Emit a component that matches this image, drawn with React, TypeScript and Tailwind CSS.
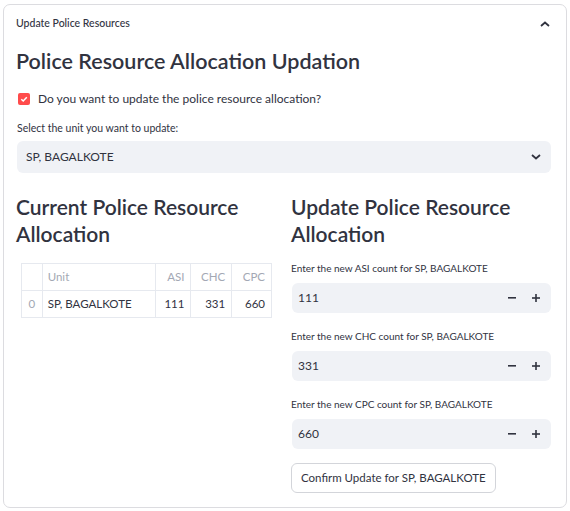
import React from "react";

const font = { fontFamily: '"Source Sans Pro", Lato, "Noto Sans", sans-serif' };

function NumberInput({ label, value }: { label: string; value: string }) {
  return (
    <div className="flex flex-col">
      <div className="text-[10px] leading-[14px] text-[#31333F] mb-[8px]">{label}</div>
      <div className="h-[30px] w-[259px] ml-[1px] rounded-[6px] bg-[#F0F2F6] flex items-center pl-[6px] pr-[3px]">
        <span className="flex-1 text-[12px] text-[#31333F]">{value}</span>
        <span className="w-[24px] flex justify-center">
          <svg width="8" height="2" viewBox="0 0 8 2"><rect width="8" height="1.6" fill="#31333F" /></svg>
        </span>
        <span className="w-[24px] flex justify-center">
          <svg width="8" height="8" viewBox="0 0 8 8"><rect y="3.2" width="8" height="1.6" fill="#31333F" /><rect x="3.2" width="1.6" height="8" fill="#31333F" /></svg>
        </span>
      </div>
    </div>
  );
}

export default function App() {
  return (
    <div className="w-[570px] h-[511px] bg-white pt-[4px] pl-[3px]" style={font}>
      <div className="w-[564px] h-[504px] border border-[#DCDCE0] rounded-[7px] flex flex-col">
        <div className="h-[34px] flex items-center justify-between pl-[12px] pr-[16px] pt-[3px]">
          <span className="text-[10.5px] font-medium text-[#31333F]">Update Police Resources</span>
          <svg width="10" height="6" viewBox="0 0 10 6"><path d="M1 5 L5 1.5 L9 5" fill="none" stroke="#31333F" strokeWidth="1.8" /></svg>
        </div>
        <div className="pl-[12px] pr-[15px] flex flex-col">
          <h1 className="text-[21.5px] leading-[30px] font-semibold text-[#31333F] mt-[7px]">Police Resource Allocation Updation</h1>
          <div className="flex items-center mt-[15px] h-[16px]">
            <div className="w-[12px] h-[12px] ml-[2px] rounded-[2px] bg-[#FF4B4B] flex items-center justify-center">
              <svg width="8" height="8" viewBox="0 0 8 8"><path d="M1.3 4.2 L3.2 6 L6.8 2.2" fill="none" stroke="white" strokeWidth="1.5" /></svg>
            </div>
            <span className="ml-[8px] text-[12px] text-[#31333F]">Do you want to update the police resource allocation?</span>
          </div>
          <div className="text-[10.5px] leading-[14px] text-[#31333F] mt-[14px] ml-[1px]">Select the unit you want to update:</div>
          <div className="mt-[6px] ml-[1px] h-[32px] rounded-[6px] bg-[#F0F2F6] flex items-center justify-between pl-[9px] pr-[10px]">
            <span className="text-[12px] text-[#31333F]">SP, BAGALKOTE</span>
            <svg width="10" height="6" viewBox="0 0 10 6"><path d="M1 1 L5 4.5 L9 1" fill="none" stroke="#31333F" strokeWidth="1.8" /></svg>
          </div>
          <div className="flex mt-[20px] gap-[19px]">
            <div className="w-[256px] flex flex-col">
              <h2 className="text-[21px] leading-[27px] font-semibold text-[#31333F]">Current Police Resource Allocation</h2>
              <table className="mt-[16px] ml-[5px] border-collapse text-[11.5px]">
                <thead>
                  <tr className="h-[27px]">
                    <th className="w-[21px] border border-[#E6E9EF] font-normal"></th>
                    <th className="w-[114px] border border-[#E6E9EF] font-normal text-left pl-[5px] text-[#A3A8B4]">Unit</th>
                    <th className="w-[36px] border border-[#E6E9EF] font-normal text-right pr-[6px] text-[#A3A8B4]">ASI</th>
                    <th className="w-[41px] border border-[#E6E9EF] font-normal text-right pr-[6px] text-[#A3A8B4]">CHC</th>
                    <th className="w-[40px] border border-[#E6E9EF] font-normal text-right pr-[6px] text-[#A3A8B4]">CPC</th>
                  </tr>
                </thead>
                <tbody>
                  <tr className="h-[27px]">
                    <td className="border border-[#E6E9EF] text-center text-[#A3A8B4]">0</td>
                    <td className="border border-[#E6E9EF] pl-[5px] text-[#31333F]">SP, BAGALKOTE</td>
                    <td className="border border-[#E6E9EF] text-right pr-[6px] text-[#31333F]">111</td>
                    <td className="border border-[#E6E9EF] text-right pr-[6px] text-[#31333F]">331</td>
                    <td className="border border-[#E6E9EF] text-right pr-[6px] text-[#31333F]">660</td>
                  </tr>
                </tbody>
              </table>
            </div>
            <div className="w-[260px] flex flex-col">
              <h2 className="text-[21px] leading-[27px] font-semibold text-[#31333F]">Update Police Resource Allocation</h2>
              <div className="mt-[14px] flex flex-col gap-[16px]">
                <NumberInput label="Enter the new ASI count for SP, BAGALKOTE" value="111" />
                <NumberInput label="Enter the new CHC count for SP, BAGALKOTE" value="331" />
                <NumberInput label="Enter the new CPC count for SP, BAGALKOTE" value="660" />
              </div>
              <button className="mt-[14px] self-start h-[30px] px-[9px] rounded-[6px] border border-[#D3D5DA] bg-white text-[11.5px] text-[#31333F]">
                Confirm Update for SP, BAGALKOTE
              </button>
            </div>
          </div>
        </div>
      </div>
    </div>
  );
}
